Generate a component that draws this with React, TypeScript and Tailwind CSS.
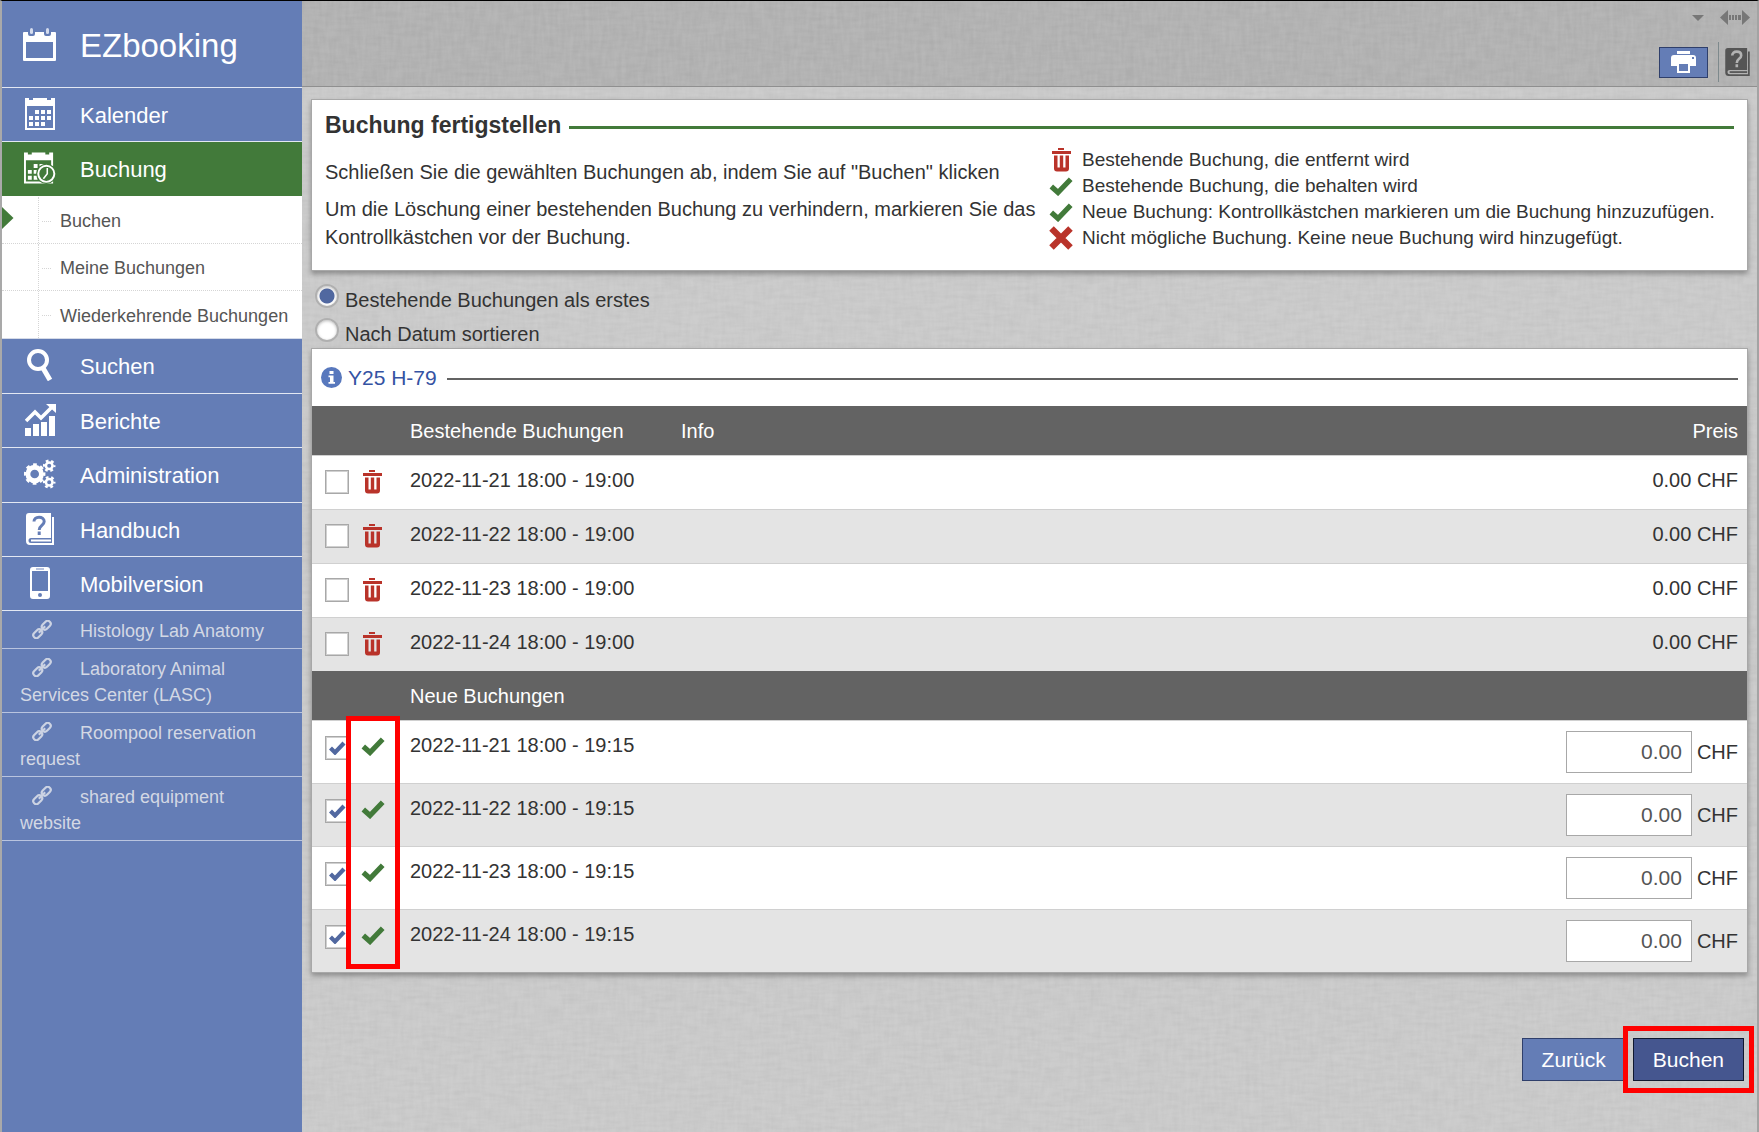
import React, { useState } from "react";

type IconProps = { className?: string };

function TitleCalendarIcon() {
  return (
    <svg width="33" height="33" viewBox="0 0 33 33" aria-hidden="true">
      <path
        fillRule="evenodd"
        fill="#fff"
        d="M1 4h4v2a2 2 0 0 0 2 2h3a2 2 0 0 0 2-2V4h9v2a2 2 0 0 0 2 2h3a2 2 0 0 0 2-2V4h4a1 1 0 0 1 1 1v27a1 1 0 0 1-1 1H1a1 1 0 0 1-1-1V5a1 1 0 0 1 1-1zM3 14v16h27V14z"
      />
      <rect x="7" y="0" width="3" height="6" rx="1.5" fill="#d5dced" />
      <rect x="23" y="0" width="3" height="6" rx="1.5" fill="#d5dced" />
    </svg>
  );
}

function CalendarIcon() {
  return (
    <svg width="30" height="32" viewBox="0 0 30 32" fill="#fff" aria-hidden="true">
      <path fillRule="evenodd" d="M0 0h4v2h4V0h14v2h4V0h4v32H0zM2 8v22h26V8z" />
      <path d="M10 12h4v4h-4zM16 12h4v4h-4zM22 12h4v4h-4zM4 18h4v4H4zM10 18h4v4h-4zM16 18h4v4h-4zM22 18h4v4h-4zM4 24h4v4H4zM10 24h4v4h-4zM16 24h4v4h-4z" />
    </svg>
  );
}

function CalendarClockIcon() {
  return (
    <svg width="33" height="32" viewBox="0 0 33 32" fill="#fff" aria-hidden="true">
      <path fillRule="evenodd" d="M0 0h4v2h4V0h14v2h4V0h4v32H0zM2 8v22h26V8z" />
      <path d="M10 12h4v4h-4zM16 12h4v4h-4zM4 18h4v4H4zM10 18h4v4h-4zM4 24h4v4H4zM10 24h4v4h-4z" />
      <circle cx="23" cy="22" r="10.5" fill="#427a3a" />
      <circle cx="23" cy="22" r="8.3" fill="#427a3a" stroke="#fff" strokeWidth="2" />
      <path d="M24 16v6l-4 5" fill="none" stroke="#fff" strokeWidth="1.6" />
    </svg>
  );
}

function SearchIcon() {
  return (
    <svg width="26" height="32" viewBox="0 0 26 32" fill="none" stroke="#fff" aria-hidden="true">
      <circle cx="11" cy="11" r="9" strokeWidth="4" />
      <path d="M16 19l7 12" strokeWidth="5" />
    </svg>
  );
}

function ChartIcon() {
  return (
    <svg width="31" height="32" viewBox="0 0 31 32" fill="#fff" aria-hidden="true">
      <path d="M0 24h6v8H0zM8 20h6v12H8zM16 18h6v14h-6zM24 12h6v20h-6z" />
      <path d="M1 17L10 8l6 6L27 3" fill="none" stroke="#fff" strokeWidth="3.6" />
      <path d="M21 0h10v9z" />
    </svg>
  );
}

function GearsIcon() {
  return (
    <svg width="33" height="30" viewBox="0 0 33 30" fill="none" stroke="#fff" aria-hidden="true">
      <circle cx="11" cy="15" r="7" strokeWidth="5" />
      <circle cx="11" cy="15" r="9.6" strokeWidth="3" strokeDasharray="3.77 3.77" strokeDashoffset="1.9" />
      <circle cx="26" cy="6.5" r="3.4" strokeWidth="2.6" />
      <circle cx="26" cy="6.5" r="5.3" strokeWidth="2.4" strokeDasharray="2.77 2.78" strokeDashoffset="1.4" />
      <circle cx="26" cy="23.5" r="3.4" strokeWidth="2.6" />
      <circle cx="26" cy="23.5" r="5.3" strokeWidth="2.4" strokeDasharray="2.77 2.78" strokeDashoffset="1.4" />
    </svg>
  );
}

function BookIcon({ className }: IconProps) {
  return (
    <svg className={className} viewBox="0 0 28 32" aria-hidden="true">
      <path
        fillRule="evenodd"
        fill="currentColor"
        d="M3 0h22v25H5a2.500 2.500 0 0 0 0 5h21V4h2v28H4a4 4 0 0 1-4-4V3a3 3 0 0 1 3-3z"
      />
      <path d="M5 27.5h20" stroke="currentColor" strokeWidth="2" />
      <path
        className="stroke-[#647db6] group-data-[tone=dark]:stroke-[#b3b3b3]"
        d="M8 8.500c0-2.600 2-4.300 5-4.300s5.200 1.600 5.200 4.300c0 4-5 3.900-5 8.500M13.200 18.500v3.500"
        fill="none"
        strokeWidth="3"
      />
    </svg>
  );
}

function PhoneIcon() {
  return (
    <svg width="20" height="32" viewBox="0 0 20 32" aria-hidden="true">
      <path fillRule="evenodd" fill="#fff" d="M3 0h14a3 3 0 0 1 3 3v26a3 3 0 0 1-3 3H3a3 3 0 0 1-3-3V3a3 3 0 0 1 3-3zM2 4v20h16V4z" />
      <rect x="6" y="1" width="8" height="2" fill="#b8c3de" />
      <circle cx="10" cy="28" r="2" fill="#647db6" />
    </svg>
  );
}

function ChainIcon() {
  return (
    <svg className="inline-block align-[-2px]" width="20" height="19" viewBox="0 0 20 19" fill="none" stroke="#ccd3e3" strokeWidth="2.200" aria-hidden="true">
      <g transform="rotate(-45 10 9.500)">
        <rect x="-1" y="6.500" width="10" height="6" rx="3" />
        <rect x="11" y="6.500" width="10" height="6" rx="3" />
        <path d="M5.500 9.500h9" />
      </g>
    </svg>
  );
}

function TrashIcon() {
  return (
    <svg width="19" height="24" viewBox="0 0 19 24" fill="#b9332a" role="img" aria-label="Wird entfernt">
      <path d="M6 0h6v2H6zM0 3h19v3H0z" />
      <path d="M2 7.500h3.500V19.500h2.300V7.500h3.400V19.500h2.300V7.500H17V20.500a3 3 0 0 1-3 3H5a3 3 0 0 1-3-3z" />
    </svg>
  );
}

function TickIcon() {
  return (
    <svg width="24" height="19" viewBox="0 0 24 19" role="img" aria-label="Bestätigt">
      <path d="M2.300 9.500l6.700 6L21.700 2.300" fill="none" stroke="#427a3a" strokeWidth="5.2" />
    </svg>
  );
}

function CrossIcon() {
  return (
    <svg width="24" height="24" viewBox="0 0 24 24" role="img" aria-label="Nicht möglich">
      <path d="M2.500 2.500l19 19M21.500 2.500l-19 19" fill="none" stroke="#b9332a" strokeWidth="6.4" />
    </svg>
  );
}

function Texture() {
  return (
    <svg className="pointer-events-none absolute inset-0 -z-10 h-full w-full" aria-hidden="true">
      <filter id="weave-h" x="0" y="0" width="100%" height="100%">
        <feTurbulence type="fractalNoise" baseFrequency="0.05 0.25" numOctaves="2" seed="4" />
        <feColorMatrix values="0 0 0 0 0  0 0 0 0 0  0 0 0 0 0  0.06 0 0 0 -0.02" />
      </filter>
      <filter id="weave-v" x="0" y="0" width="100%" height="100%">
        <feTurbulence type="fractalNoise" baseFrequency="0.25 0.05" numOctaves="2" seed="9" />
        <feColorMatrix values="0 0 0 0 1  0 0 0 0 1  0 0 0 0 1  0.14 0 0 0 -0.04" />
      </filter>
      <rect width="100%" height="100%" filter="url(#weave-h)" />
      <rect width="100%" height="100%" filter="url(#weave-v)" />
    </svg>
  );
}

function NavItem({ icon, label, active = false, tall = false }: { icon: React.ReactNode; label: string; active?: boolean; tall?: boolean }) {
  return (
    <li>
      <a
        href="#"
        className={`flex items-center border-b text-[22px] leading-7 text-white ${tall ? "h-[55px]" : "h-[54px]"} ${
          active ? "border-[#427a3a] bg-[#427a3a]" : "border-[#e3e8f3]"
        }`}
      >
        <span className="flex w-[78px] pb-[2px] pl-[22px]">
          <span className="flex w-8 justify-center">{icon}</span>
        </span>
        <span className="pt-[2px]">{label}</span>
      </a>
    </li>
  );
}

const subItems = ["Buchen", "Meine Buchungen", "Wiederkehrende Buchungen"];
const linkItems = ["Histology Lab Anatomy", "Laboratory Animal Services Center (LASC)", "Roompool reservation request", "shared equipment website"];

function Sidebar() {
  return (
    <nav className="w-[300px] shrink-0 bg-[#647db6]">
      <div className="flex h-[87px] items-center border-b border-[#e3e8f3] pl-[21px]">
        <TitleCalendarIcon />
        <span className="pt-[3px] pl-6 text-[33px] leading-10 text-white">EZbooking</span>
      </div>
      <ul>
        <NavItem icon={<CalendarIcon />} label="Kalender" />
        <NavItem icon={<CalendarClockIcon />} label="Buchung" active />
      </ul>
      <ul className="border-b border-[#d5dbe8] bg-white pt-px">
        {subItems.map((s, i) => (
          <li key={s} className={`relative flex h-[47px] ${i < 2 ? "border-b border-dotted border-[#d5d5d5]" : ""}`}>
            {i === 0 && (
              <svg className="absolute top-[10px] left-0" width="12" height="22" viewBox="0 0 12 22" aria-hidden="true">
                <path d="M0 0l11.500 11L0 22z" fill="#427a3a" />
              </svg>
            )}
            <span className="w-[37px] shrink-0 border-r border-dotted border-[#d5d5d5]" />
            <a href="#" className="flex items-center pt-[2px] text-[18px] leading-6 text-[#555]">
              <span className="mr-[9px] ml-[3px] w-[9px] border-t border-dotted border-[#d5d5d5]" />
              {s}
            </a>
          </li>
        ))}
      </ul>
      <ul>
        <NavItem icon={<SearchIcon />} label="Suchen" tall />
        <NavItem icon={<ChartIcon />} label="Berichte" />
        <NavItem icon={<GearsIcon />} label="Administration" tall />
        <NavItem icon={<BookIcon className="h-8 w-7" />} label="Handbuch" />
        <NavItem icon={<PhoneIcon />} label="Mobilversion" />
      </ul>
      <ul>
        {linkItems.map((l) => (
          <li key={l} className="border-b border-[#b9c4df] px-[18px] pt-[7px] pb-1">
            <a href="#" className="block text-[18px] leading-[26px] text-[#d3d8e4]">
              <span className="inline-block w-[60px] pl-3">
                <ChainIcon />
              </span>
              {l}
            </a>
          </li>
        ))}
      </ul>
    </nav>
  );
}

function TopBar() {
  return (
    <header className="relative isolate flex h-[86px] flex-col items-end border-b border-[#8f8f8f] bg-[#b2b2b2] pr-[7px]">
      <Texture />
      <div className="flex h-[41px] items-center gap-4 pb-2">
        <button type="button" aria-label="Menü">
          <svg width="12" height="6" viewBox="0 0 12 6" aria-hidden="true">
            <path d="M0 0h12L6 6z" fill="#777" />
          </svg>
        </button>
        <button type="button" aria-label="Breite anpassen">
          <svg width="30" height="15" viewBox="0 0 30 15" fill="#777" aria-hidden="true">
            <path d="M0 7.500L8 0v15zM30 7.500L22 0v15zM9 5h2v5H9zM12 5h2v5h-2zM15 5h2v5h-2zM18 5h3v5h-3z" />
          </svg>
        </button>
      </div>
      <div className="flex items-center">
        <button type="button" aria-label="Drucken" className="flex h-[31px] w-[49px] items-center justify-center border border-[#2f3f6b] bg-[#647db6]">
          <svg width="25" height="22" viewBox="0 0 25 22" fill="#fff" aria-hidden="true">
            <path d="M6 0h13v3H6zM3 4h19a3 3 0 0 1 3 3v8H0V7a3 3 0 0 1 3-3z" />
            <path d="M6 12h13v10H6z" />
            <path d="M8 13h9v7H8zM21 6h2v2h-2z" fill="#647db6" />
          </svg>
        </button>
        <span className="ml-[10px] h-10 w-px bg-[#7d898c]" />
        <button type="button" aria-label="Hilfe" data-tone="dark" className="group ml-[6px] text-[#555]">
          <BookIcon className="h-7 w-[25px]" />
        </button>
      </div>
    </header>
  );
}

const legend = [
  { icon: <TrashIcon />, text: "Bestehende Buchung, die entfernt wird" },
  { icon: <TickIcon />, text: "Bestehende Buchung, die behalten wird" },
  { icon: <TickIcon />, text: "Neue Buchung: Kontrollkästchen markieren um die Buchung hinzuzufügen." },
  { icon: <CrossIcon />, text: "Nicht mögliche Buchung. Keine neue Buchung wird hinzugefügt." },
];

function IntroPanel() {
  return (
    <section className="h-[172px] border border-[#a8a8a8] bg-white px-[13px] pt-[11px] shadow-[0_3px_5px_rgba(0,0,0,0.3)]">
      <div className="flex items-center">
        <h1 className="text-[23px] leading-7 font-bold">Buchung fertigstellen</h1>
        <span className="mt-1 ml-2 h-[3px] grow bg-[#427a3a]" />
      </div>
      <div className="flex justify-between pt-2">
        <div className="min-w-0 pt-[11px] leading-7">
          <p>Schließen Sie die gewählten Buchungen ab, indem Sie auf "Buchen" klicken</p>
          <p className="pt-[9px]">Um die Löschung einer bestehenden Buchung zu verhindern, markieren Sie das Kontrollkästchen vor der Buchung.</p>
        </div>
        <ul className="w-[686px] shrink-0 text-[19px] leading-[26px] whitespace-nowrap">
          {legend.map((l) => (
            <li key={l.text} className="flex h-[26px] items-center">
              <span className="mr-2 flex w-[26px] shrink-0 justify-center">{l.icon}</span>
              {l.text}
            </li>
          ))}
        </ul>
      </div>
    </section>
  );
}

function SortOptions() {
  const [sort, setSort] = useState("first");
  const options = [
    ["first", "Bestehende Buchungen als erstes"],
    ["date", "Nach Datum sortieren"],
  ];
  return (
    <fieldset className="h-[77px] pt-[13px] pl-1">
      {options.map(([value, label]) => (
        <label key={value} className="flex h-[34px] items-start gap-[6px]">
          <input
            type="radio"
            name="sort"
            checked={sort === value}
            onChange={() => setSort(value)}
            className="h-6 w-6 appearance-none rounded-full border-2 border-[#b0b0b0] bg-white shadow-[inset_0_1px_3px_rgba(0,0,0,0.25)] checked:bg-[radial-gradient(circle,#5168a0_0_7px,#ffffff_8px)]"
          />
          <span className="pt-[2px] leading-7">{label}</span>
        </label>
      ))}
    </fieldset>
  );
}

function CheckField({ checked: initial = false, label }: { checked?: boolean; label: string }) {
  const [checked, setChecked] = useState(initial);
  return (
    <span className="relative block h-6 w-6">
      <input
        type="checkbox"
        aria-label={label}
        checked={checked}
        onChange={() => setChecked(!checked)}
        className="block h-6 w-6 appearance-none border border-[#a8a8a8] bg-white shadow-[inset_0_0_0_1px_#d0d0d0]"
      />
      {checked && (
        <svg className="pointer-events-none absolute top-[5px] left-1" width="17" height="14" viewBox="0 0 17 14" aria-hidden="true">
          <path d="M1.500 7l4.500 4.500L15 2" fill="none" stroke="#5168a0" strokeWidth="4.2" />
        </svg>
      )}
    </span>
  );
}

const days = ["2022-11-21", "2022-11-22", "2022-11-23", "2022-11-24"];

function BookingTable() {
  return (
    <section className="relative border border-[#a8a8a8] bg-white shadow-[0_3px_5px_rgba(0,0,0,0.3)]">
      <div className="flex h-[57px] items-center px-[9px]">
        <svg width="21" height="21" viewBox="0 0 21 21" aria-hidden="true">
          <circle cx="10.500" cy="10.500" r="10.500" fill="#5878bd" />
          <path d="M8.500 4h4v3h-4zM7.500 8.500h5V15H14v1.800H7.500V15H9v-4.700H7.500z" fill="#fff" />
        </svg>
        <a href="#" className="pl-[6px] text-[21px] leading-7 text-[#3553a3]">
          Y25 H-79
        </a>
        <span className="mt-[2px] ml-[10px] h-[2px] grow bg-[#636363]" />
      </div>
      <table className="w-full table-fixed border-collapse text-left">
        <colgroup>
          <col className="w-[49px]" />
          <col className="w-[49px]" />
          <col className="w-[271px]" />
          <col />
          <col className="w-[200px]" />
        </colgroup>
        <tbody>
          <tr className="h-[49px] bg-[#636363] text-white">
            <td />
            <td />
            <th className="pt-[2px] font-normal">Bestehende Buchungen</th>
            <th className="pt-[2px] font-normal">Info</th>
            <th className="pt-[2px] pr-[9px] text-right font-normal">Preis</th>
          </tr>
          {days.map((d) => (
            <tr key={d} className="h-[54px] border-t border-[#d0d0d0] align-top odd:bg-[#e4e4e4]">
              <td className="pt-[14px] pl-[13px]">
                <CheckField label={`Bestehende Buchung ${d} behalten`} />
              </td>
              <td className="pt-[14px] pl-[2px]">
                <TrashIcon />
              </td>
              <td className="pt-[10px] leading-7">{d} 18:00 - 19:00</td>
              <td />
              <td className="pt-[10px] pr-[9px] text-right leading-7">0.00 CHF</td>
            </tr>
          ))}
        </tbody>
        <tbody>
          <tr className="h-[49px] bg-[#636363] text-white">
            <td />
            <td />
            <th className="pt-[2px] font-normal" colSpan={3}>
              Neue Buchungen
            </th>
          </tr>
          {days.map((d) => (
            <tr key={d} className="h-[63px] border-t border-[#d0d0d0] align-top odd:bg-[#e4e4e4]">
              <td className="pt-[15px] pl-[13px]">
                <CheckField checked label={`Neue Buchung ${d} hinzufügen`} />
              </td>
              <td className="pt-4">
                <TickIcon />
              </td>
              <td className="pt-[10px] leading-7">{d} 18:00 - 19:15</td>
              <td />
              <td className="pt-[10px] pr-[9px]">
                <label className="flex items-center justify-end gap-[5px]">
                  <input
                    type="text"
                    defaultValue="0.00"
                    aria-label={`Preis ${d}`}
                    className="h-[42px] w-[126px] border border-[#a8a8a8] bg-white pr-[9px] text-right text-[21px] text-[#555]"
                  />
                  CHF
                </label>
              </td>
            </tr>
          ))}
        </tbody>
      </table>
      <span className="pointer-events-none absolute bottom-[3px] left-[34px] h-[253px] w-[54px] border-5 border-[#ff0000]" />
    </section>
  );
}

export default function App() {
  return (
    <div className="flex min-h-screen border-t border-r-2 border-l-2 border-t-black border-r-[#a3a3a3] border-l-[#a9a9a9] bg-[#cacaca] font-['Liberation_Sans',Arial,sans-serif] text-[20px] text-[#333]">
      <Sidebar />
      <div className="flex min-w-0 grow flex-col">
        <TopBar />
        <main className="relative isolate grow pt-3 pr-[9px] pl-[9px]">
          <Texture />
          <IntroPanel />
          <SortOptions />
          <BookingTable />
          <div className="flex justify-end gap-[7px] pt-[65px] pr-1 pb-8">
            <button type="button" className="h-[43px] border border-[#2f3f6b] bg-[#647db6] px-[19px] text-[21px] text-white">
              Zurück
            </button>
            <div className="relative">
              <button type="button" className="h-[43px] border border-[#10182f] bg-[#45568f] px-[19px] text-[21px] text-white">
                Buchen
              </button>
              <span className="pointer-events-none absolute -inset-x-[10px] -inset-y-3 border-5 border-[#ff0000]" />
            </div>
          </div>
        </main>
      </div>
    </div>
  );
}
